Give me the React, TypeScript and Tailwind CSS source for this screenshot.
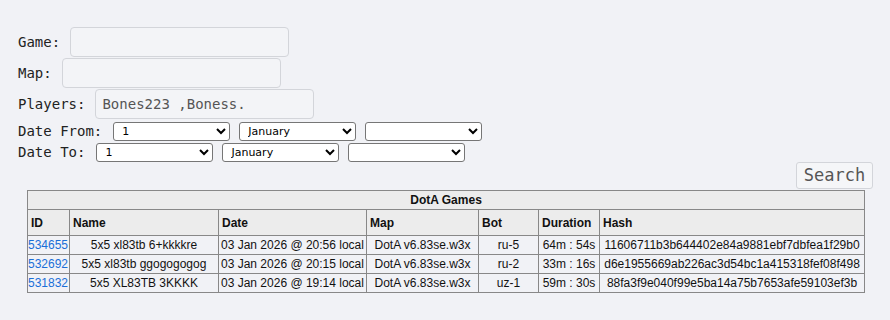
import React, { FC } from "react";

const mono = "font-['DejaVu_Sans_Mono','Liberation_Mono',monospace]";

type Game = {
  id: string;
  name: string;
  date: string;
  map: string;
  bot: string;
  duration: string;
  hash: string;
};

const games: Game[] = [
  {
    id: "534655",
    name: "5x5 xl83tb 6+kkkkre",
    date: "03 Jan 2026 @ 20:56 local",
    map: "DotA v6.83se.w3x",
    bot: "ru-5",
    duration: "64m : 54s",
    hash: "11606711b3b644402e84a9881ebf7dbfea1f29b0",
  },
  {
    id: "532692",
    name: "5x5 xl83tb ggogogogog",
    date: "03 Jan 2026 @ 20:15 local",
    map: "DotA v6.83se.w3x",
    bot: "ru-2",
    duration: "33m : 16s",
    hash: "d6e1955669ab226ac3d54bc1a415318fef08f498",
  },
  {
    id: "531832",
    name: "5x5 XL83TB 3KKKK",
    date: "03 Jan 2026 @ 19:14 local",
    map: "DotA v6.83se.w3x",
    bot: "uz-1",
    duration: "59m : 30s",
    hash: "88fa3f9e040f99e5ba14a75b7653afe59103ef3b",
  },
];

const months = ["January", "February", "March"];

type FieldProps = { label: string; value?: string };
const TextField: FC<FieldProps> = ({ label, value }) => {
  return (
    <div className="flex items-center gap-[10px] h-[30px]">
      <span className={`${mono} text-[14px] leading-[19px] text-[#222]`}>{label}</span>
      <input
        defaultValue={value}
        className={`${mono} w-[219px] h-[30px] px-[6px] text-[14px] text-[#555] bg-[#f3f4f7] border border-[#d3d5da] rounded-[4px] outline-none`}
      />
    </div>
  );
};

const DateRow: FC<{ label: string }> = ({ label }) => {
  const select =
    "h-[19px] w-[117px] pl-[4px] text-[11px] leading-[15px] font-['DejaVu_Sans',sans-serif] text-black bg-white border border-[#767676] rounded-[3px]";
  return (
    <div className="flex items-center gap-[9px] h-[19px]">
      <span className={`${mono} text-[14px] leading-[19px] text-[#222] mr-[2px]`}>{label}</span>
      <select className={select} defaultValue="1">
        <option>1</option>
        <option>2</option>
      </select>
      <select className={select} defaultValue="January">
        {months.map((m) => (
          <option key={m}>{m}</option>
        ))}
      </select>
      <select className={select} defaultValue="">
        <option value=""></option>
        <option>2026</option>
      </select>
    </div>
  );
};

const th = "border border-[#888] px-[3px] text-left font-bold";
const td = "border border-[#888] h-[19px] whitespace-nowrap";

const GamesTable: FC = () => {
  return (
    <table className="table-fixed border-collapse w-[837px] ml-[27px] font-['Liberation_Sans',Arial,sans-serif] text-[12px] text-[#111]">
      <colgroup>
        <col className="w-[42px]" />
        <col className="w-[149px]" />
        <col className="w-[148px]" />
        <col className="w-[112px]" />
        <col className="w-[60px]" />
        <col className="w-[61px]" />
        <col className="w-[265px]" />
      </colgroup>
      <thead>
        <tr className="bg-[#ececec]">
          <th colSpan={7} className="border border-[#888] h-[19px] text-center font-bold">
            DotA Games
          </th>
        </tr>
        <tr className="bg-[#ececec] h-[26px]">
          <th className={th}>ID</th>
          <th className={th}>Name</th>
          <th className={th}>Date</th>
          <th className={th}>Map</th>
          <th className={th}>Bot</th>
          <th className={th}>Duration</th>
          <th className={th}>Hash</th>
        </tr>
      </thead>
      <tbody>
        {games.map((g) => (
          <tr key={g.id}>
            <td className={`${td} text-left px-0`}>
              <a href="#" className="text-[#1a6fd8]">
                {g.id}
              </a>
            </td>
            <td className={`${td} text-center px-[3px]`}>{g.name}</td>
            <td className={`${td} text-left px-[2px]`}>{g.date}</td>
            <td className={`${td} text-center px-[3px]`}>{g.map}</td>
            <td className={`${td} text-center px-[3px]`}>{g.bot}</td>
            <td className={`${td} text-center px-[1px]`}>{g.duration}</td>
            <td className={`${td} text-center px-[1px]`}>{g.hash}</td>
          </tr>
        ))}
      </tbody>
    </table>
  );
};

const App: FC = () => {
  return (
    <div className="min-h-[320px] w-[890px] bg-[#f1f2f6] pt-[27px]">
      <div className="flex flex-col pl-[18px] gap-[1px]">
        <TextField label="Game:" />
        <TextField label="Map:" />
        <TextField label="Players:" value="Bones223 ,Boness." />
        <div className="flex flex-col gap-[2px] mt-[2px]">
          <DateRow label="Date From:" />
          <DateRow label="Date To:" />
        </div>
      </div>
      <div className="flex justify-end pr-[17px] mb-[1px]">
        <button
          className={`${mono} h-[27px] w-[77px] text-[17px] leading-[25px] text-[#555] bg-[#f5f6f8] border border-[#d3d5da] rounded-[3px]`}
        >
          Search
        </button>
      </div>
      <GamesTable />
    </div>
  );
};

export default App;
